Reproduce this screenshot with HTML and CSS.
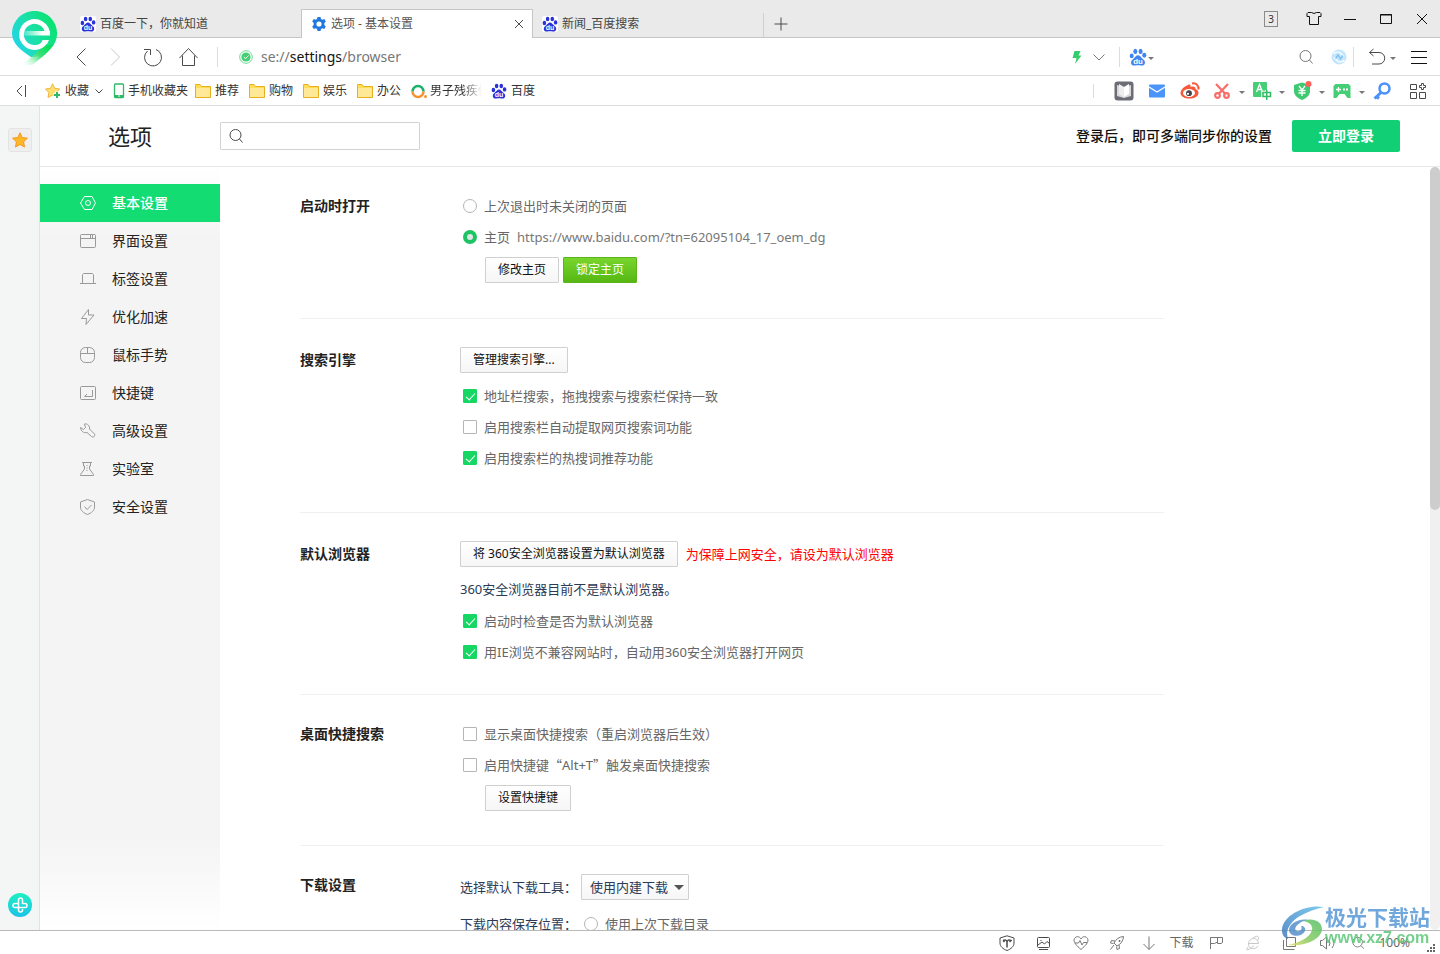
FILE: index.html
```html
<!DOCTYPE html>
<html lang="zh-CN">
<head>
<meta charset="utf-8">
<title>选项 - 基本设置</title>
<link rel="stylesheet" href="styles.css">
</head>
<body>
<svg class="sprite" aria-hidden="true">
  <symbol id="paw" viewBox="0 0 16 16">
    <ellipse cx="2.4" cy="7" rx="1.8" ry="2.2"/><ellipse cx="5.6" cy="3" rx="1.8" ry="2.3"/><ellipse cx="10.3" cy="3" rx="1.8" ry="2.3"/><ellipse cx="13.6" cy="6.4" rx="1.8" ry="2.2"/>
    <path d="M8 6.4c1.8 0 2.4 1.6 3.6 2.7 1.3 1.2 2.9 2.2 2.6 4.2-.3 2-2 2.5-3.6 2.2-1.800-.3-3.400-.3-5.200 0-1.800.3-3.400-.4-3.600-2.200-.2-2 1.300-3 2.600-4.200C5.600 8 6.200 6.400 8 6.400z"/>
    <text x="8" y="14.200" class="paw-text">du</text>
  </symbol>
  <symbol id="folder" viewBox="0 0 16 16">
    <path d="M.5 2.500V14.500h15V3.500H6.500L5 1.500H.5z" fill="#ffdd55" stroke="#e9ae1c"/><path d="M1 5h14v9H1z" fill="#ffe996"/>
  </symbol>
  <symbol id="lens" viewBox="0 0 16 16"><circle cx="7.500" cy="7" r="5.500"/><path d="M11.500 11l3 3.500"/></symbol>
</svg>

<header class="titlebar">
  <nav class="tabs">
    <a class="tab" href="#"><span class="favicon"><svg class="i16 c-baidu"><use href="#paw"/></svg></span>百度一下，你就知道</a>
    <div class="tab tab-active">
      <svg class="i16" viewBox="0 0 16 16"><g fill="#1f77e0"><path d="M6.500 1h3l.5 2 1.300.7 2-.8 1.500 2.600L13.300 7v2l1.500 1.500-1.500 2.600-2-.8-1.300.7-.5 2h-3L6 13l-1.300-.7-2 .8-1.500-2.600L2.700 9V7L1.200 5.500l1.500-2.600 2 .8L6 3z"/></g><circle cx="8" cy="8" r="2.600" fill="#fff"/></svg>
      <span class="tab-title">选项 - 基本设置</span>
      <button class="tab-close" aria-label="关闭标签"><svg class="i10 line" viewBox="0 0 10 10"><path d="M1 1l8 8M9 1l-8 8"/></svg></button>
    </div>
    <a class="tab tab-last" href="#"><span class="favicon"><svg class="i16 c-baidu"><use href="#paw"/></svg></span>新闻_百度搜索</a>
    <button class="tab-new" aria-label="新建标签"><svg class="i14 line" viewBox="0 0 14 14"><path d="M7 .5v13M.5 7h13"/></svg></button>
  </nav>
  <div class="window-controls">
    <button class="count"><span>3</span></button>
    <button aria-label="皮肤"><svg class="i16 line dark" viewBox="0 0 16 16"><path d="M5.500 1.500Q8 3.500 10.500 1.500h3.500l1 1V5.500h-2.500V13.500h-9V5.500H1V2.500l1-1z"/></svg></button>
    <button aria-label="最小化"><svg class="i12 line dark" viewBox="0 0 12 12"><path d="M0 6.500h12"/></svg></button>
    <button aria-label="最大化"><svg class="i12 line dark" viewBox="0 0 12 12"><path d="M.5 1.500h11v9H.5zM0 2h12"/></svg></button>
    <button aria-label="关闭"><svg class="i12 line dark" viewBox="0 0 12 12"><path d="M1 1l10 10M11 1L1 11"/></svg></button>
  </div>
</header>

<svg class="logo" viewBox="0 0 52 60" aria-hidden="true">
  <defs>
    <linearGradient id="lg" x1="0" y1=".8" x2="1" y2=".3"><stop offset="0" stop-color="#22d4ef"/><stop offset=".5" stop-color="#1be0a8"/><stop offset="1" stop-color="#08e36a"/></linearGradient>
    <linearGradient id="lt" gradientUnits="userSpaceOnUse" x1="38" y1="38" x2="18" y2="58"><stop offset="0" stop-color="#08e060"/><stop offset=".4" stop-color="#3fe07a"/><stop offset="1" stop-color="#c8f8d8" stop-opacity=".1"/></linearGradient>
    <linearGradient id="lb" x1="0" y1="0" x2="1" y2="0"><stop offset="0" stop-color="#fff" stop-opacity=".2"/><stop offset=".7" stop-color="#fff"/></linearGradient>
  </defs>
  <path d="M26.500 3C39 3 49 13 49 25.500c0 7-3 12-8 16L27 49h-4C14 43 4 36 4 25.500 4 13 14 3 26.500 3z" fill="url(#lg)"/>
  <path d="M46 36C42 43 32 51 24 57H14l13-11 9-8z" fill="url(#lt)"/>
  <path d="M39.500 25.500A13 13 0 1 0 37.500 33.500" fill="none" stroke="#fff" stroke-width="4.800"/>
  <path d="M34.500 32H41l-2 4h-6z" fill="#fff"/>
  <path d="M16 23h26v4.500H16z" fill="url(#lb)"/>
</svg>

<div class="toolbar">
  <div class="nav-buttons">
    <button aria-label="后退"><svg class="i20 line" viewBox="0 0 20 20"><path d="M14.500 1.500L6 10l8.500 8.500"/></svg></button>
    <button aria-label="前进"><svg class="i20 line pale" viewBox="0 0 20 20"><path d="M4 1.500l8.500 8.500L4 18.500"/></svg></button>
    <button aria-label="刷新"><svg class="i20 line" viewBox="0 0 20 20"><path d="M13 2.500A8.500 8.500 0 1 1 4.500 4M1 2.500h6.500V8"/></svg></button>
    <button aria-label="主页"><svg class="i20 line" viewBox="0 0 20 20"><path d="M.5 11L9.500 1.500 18.500 11M3.500 8.500V18.500h12V8.500"/></svg></button>
  </div>
  <i class="rule"></i>
  <label class="address">
    <svg class="i14" viewBox="0 0 14 14"><circle cx="7" cy="7" r="6.300" fill="#fff" stroke="#6cdb93"/><circle cx="7" cy="7" r="4.600" fill="#45cf75"/><path d="M4.800 7l1.700 1.700L9.500 5.500" fill="none" stroke="#fff"/></svg>
    <span class="url">se://<b>settings</b>/browser</span>
  </label>
  <div class="tools">
    <button class="s22" aria-label="极速模式"><svg class="i16" viewBox="0 0 16 16"><path d="M5.500 2h6L9.500 6.500h3L6 15l1.500-6H3.500z" fill="#36cd6c"/></svg></button>
    <button class="s22" aria-label="展开"><svg class="i12 line gray" viewBox="0 0 12 12"><path d="M.5 3.500L6 9l5.500-5.500"/></svg></button>
    <i class="rule"></i>
    <button class="s18" aria-label="百度"><svg class="i18 c-blue"><use href="#paw"/></svg></button>
    <i class="caret"></i>
    <button class="s22 search-slot" aria-label="搜索"><svg class="i16 line gray"><use href="#lens"/></svg></button>
    <button class="s22 sync-slot" aria-label="同步"><svg class="i16" viewBox="0 0 16 16"><circle cx="8" cy="8" r="7.500" fill="#c4e6fc"/><path d="M2.500 5Q5 2 9 3.500l4 4M13.500 11Q11 14 7 12.500L3 8.500" fill="none" stroke="#fff" stroke-width="1.200"/><path d="M4.500 9.500L7 6l2.500 4L12 6.500" fill="none" stroke="#79c2f3" stroke-width="1.300"/></svg></button>
    <i class="rule rule-tight"></i>
    <button class="s24" aria-label="撤销"><svg class="i18 line" viewBox="0 0 18 18"><path d="M5.500 1L1.500 4.500l4 3.500M1.500 4.500H11a5.500 5.500 0 0 1 0 11.500H4"/></svg></button>
    <i class="caret"></i>
    <button class="s22 menu-slot" aria-label="菜单"><svg class="i16 line dark" viewBox="0 0 16 16"><path d="M0 2.500h16M0 8.500h16M0 14.500h16"/></svg></button>
  </div>
</div>

<div class="bookmarks">
  <button class="collapse" aria-label="收起"><svg class="i12 line" viewBox="0 0 12 12"><path d="M7 1L2 6l5 5M10.500 0v12"/></svg></button>
  <a href="#"><svg class="i16" viewBox="0 0 16 16"><path d="M7.500.8l2.200 4.500 5 .7-3.600 3.500.8 5-4.400-2.400L3 14.500l.9-5L.5 6l5-.7z" fill="#ffdf70" stroke="#efb73c"/><path d="M12 8.500v7M8.500 12h7" stroke="#fff" stroke-width="4"/><path d="M12 9v6M9 12h6" stroke="#31b96a" stroke-width="2"/></svg>收藏<svg class="i8 line" viewBox="0 0 8 8"><path d="M.5 2.500L4 6l3.500-3.500"/></svg></a>
  <a class="tight" href="#"><svg class="phone" viewBox="0 0 12 16"><rect x="1.500" y="1" width="9" height="13.500" rx="1" fill="#fff" stroke="#2fb868" stroke-width="1.300"/><path d="M1 12h10v2.500H1z" fill="#2fb868"/><circle cx="6" cy="13" r=".8" fill="#fff"/></svg>手机收藏夹</a>
  <a href="#"><svg class="i16"><use href="#folder"/></svg>推荐</a>
  <a href="#"><svg class="i16"><use href="#folder"/></svg>购物</a>
  <a href="#"><svg class="i16"><use href="#folder"/></svg>娱乐</a>
  <a href="#"><svg class="i16"><use href="#folder"/></svg>办公</a>
  <a class="tight" href="#"><svg class="i16" viewBox="0 0 16 16"><path d="M1.500 8.500a5.500 5.500 0 1 1 11 0" fill="none" stroke="#19b26b" stroke-width="2.500"/><path d="M1.500 8.500a5.500 5.500 0 0 0 11 0" fill="none" stroke="#f8922f" stroke-width="2.500"/><circle cx="14.500" cy="13.500" r="1.500" fill="#f8922f"/></svg><span class="fade">男子残疾仍</span></a>
  <a href="#"><svg class="i16 c-baidu"><use href="#paw"/></svg>百度</a>
  <div class="plugins">
    <i class="rule rule-short"></i>
    <button class="s33" aria-label="阅读"><svg class="i20" viewBox="0 0 20 20"><rect x=".5" y=".5" width="19" height="19" rx="3" fill="#6b6c75"/><path d="M3 4l7 2 7-2v11l-7 2-7-2z" fill="#d9d9dc"/><path d="M5 3l5 3v10l-5-3z" fill="#eee"/><path d="M10 6l5-3v10l-5 3z" fill="#fff"/></svg></button>
    <button class="s33" aria-label="邮件"><svg class="i16" viewBox="0 0 16 16"><rect y="1.500" width="16" height="13" rx="1" fill="#4b95fa"/><path d="M0 4l8 5 8-5" fill="none" stroke="#fff" stroke-width="1.200"/></svg></button>
    <button class="s33" aria-label="微博"><svg class="i20" viewBox="0 0 20 20"><path d="M8 4c2-1 3 0 2.500 2 3-1 5.500 0 5 2 2 .8 3 2 3 4 0 3.500-4 5.500-9 5.500S.5 15.500.5 12C.5 8.500 5 5 8 4z" fill="#f4593b"/><ellipse cx="9" cy="12" rx="6" ry="4" fill="#fff"/><circle cx="9" cy="12.200" r="2.900" fill="#444"/><circle cx="8" cy="12.800" r="1.100" fill="#fff"/><path d="M12 2.500c4-1 7 2 6.500 6" fill="none" stroke="#f4593b" stroke-width="2"/></svg></button>
    <button class="s32" aria-label="截图"><svg class="i16" viewBox="0 0 16 16"><g fill="none" stroke="#f86d68" stroke-width="2.200"><path d="M2 1l9.500 10M14 1L4.500 11"/><circle cx="3.500" cy="12.500" r="2.300"/><circle cx="12.500" cy="12.500" r="2.300"/></g></svg></button><i class="caret"></i>
    <button class="s32" aria-label="翻译"><svg class="i20" viewBox="0 0 20 20"><rect x="1" y="1" width="14" height="15" rx="1" fill="#45ce76"/><path d="M4.500 11L7.500 3.500 10.500 11M5.500 8.500h4" fill="none" stroke="#fff" stroke-width="1.300"/><path d="M11 11.500h7.500v4H11zM14.700 9v9.500" fill="none" stroke="#fff" stroke-width="3.400"/><path d="M11 11.500h7.500v4H11zM14.700 9v10" fill="none" stroke="#31ba64" stroke-width="1.500"/></svg></button><i class="caret"></i>
    <button class="s32" aria-label="购物保护"><svg class="i20" viewBox="0 0 20 20"><path d="M10 1.500l8 2.500v6c0 4-3 7-8 9-5-2-8-5-8-9V4z" fill="#3fc970"/><path d="M7 5l3 4 3-4M10 9v6M6.500 9.500h7M6.500 12h7" fill="none" stroke="#fff" stroke-width="1.300"/><circle cx="16.500" cy="3" r="3" fill="#ff625b"/></svg></button><i class="caret"></i>
    <button class="s32" aria-label="游戏"><svg class="i18" viewBox="0 0 18 18"><path d="M2.500 2h13l2 2v12h-3l-3-4h-5l-3 4h-3V4z" fill="#45ce76"/><path d="M5.500 5v5M3 7.500h5" stroke="#fff" stroke-width="1.300"/><path d="M10 6.500h2v2h-2zM13 6.500h2v2h-2z" fill="#fff"/></svg></button><i class="caret"></i>
    <button class="s32" aria-label="密码"><svg class="i18" viewBox="0 0 18 18"><g fill="none" stroke="#4c91fb"><circle cx="11.500" cy="6.500" r="5" stroke-width="2.500"/><path d="M8 10.500L1.500 16.500M3.500 14.500l2.500 2" stroke-width="3"/></g></svg></button>
    <button class="s40" aria-label="全部扩展"><svg class="i16 line" viewBox="0 0 16 16"><path d="M.5 1.500h6v5h-6zM.5 9.500h6v6h-6zM9.500 9.500h6v6h-6zM11.500 .5h2v2h2v2h-2v2h-2v-2h-2v-2h2z"/></svg></button>
  </div>
</div>

<div class="workspace">
  <aside class="dock">
    <button class="dock-star" aria-label="收藏夹"><svg class="i16" viewBox="0 0 16 16"><path d="M8 .8l2.200 4.700 5.200.7-3.800 3.600.9 5.200L8 12.500 3.500 15l.9-5.200L.6 6.200l5.200-.7z" fill="#ffb62a" stroke="#f09a1c"/></svg></button>
    <button class="dock-add" aria-label="添加"><svg class="i18 line" viewBox="0 0 18 18"><path d="M7.500 11V4a2 2 0 0 1 4 0v3.500H14a2 2 0 0 1 0 4H4a2 2 0 0 1 0-4h3M7.500 11.500V14a2 2 0 0 0 4 0v-1"/></svg></button>
  </aside>
  <div class="page">
    <header class="page-header">
      <h1>选项</h1>
      <label class="search"><svg class="i16 line"><use href="#lens"/></svg><input type="text" aria-label="搜索选项"></label>
      <span class="login-hint">登录后，即可多端同步你的设置</span>
      <button class="login">立即登录</button>
    </header>
    <div class="page-body">
      <nav class="sidebar">
        <a class="current" href="#"><svg class="i16 line" viewBox="0 0 16 16"><path d="M4.500 1.500h7.500L15.500 8 12 14.500H4.500L.5 8z"/><circle cx="8" cy="8" r="2.500"/></svg>基本设置</a>
        <a href="#"><svg class="i16 line" viewBox="0 0 16 16"><rect x=".5" y="1.500" width="15" height="13" rx="1"/><path d="M1 5.500h14M10.500 2v3M12.500 2v3"/></svg>界面设置</a>
        <a href="#"><svg class="i16 line" viewBox="0 0 16 16"><path d="M0 12.500h16M2.500 12V3.500l1-1h9l1 1V12"/></svg>标签设置</a>
        <a href="#"><svg class="i16 line" viewBox="0 0 16 16"><path d="M8.500.5L1.500 9.500h5l-.5 6 8-9.500H8.500z"/></svg>优化加速</a>
        <a href="#"><svg class="i16 line" viewBox="0 0 16 16"><rect x=".5" y=".5" width="14" height="15" rx="5"/><path d="M1 6.500h13M7.500 1v5"/></svg>鼠标手势</a>
        <a href="#"><svg class="i16 line" viewBox="0 0 16 16"><rect x=".5" y="1.500" width="15" height="13" rx="1"/><path d="M12.500 5v6.500h-8L7 9"/></svg>快捷键</a>
        <a href="#"><svg class="i16 line" viewBox="0 0 16 16"><path d="M4.500 1c3-.8 5.500 2 5 5l5 5c1 2-1 4-3 2.500L7 9.500C4 10.500.5 8 .5 4.500l3 2 2-2z"/></svg>高级设置</a>
        <a href="#"><svg class="i16 line" viewBox="0 0 16 16"><path d="M2 1.500h10M3.500 2v3h1v3L.5 13.500v1h13v-1L9.500 8V5h1V2M6.500 4.500h1M6.500 7h1M6.500 9.500h1"/></svg>实验室</a>
        <a href="#"><svg class="i16 line" viewBox="0 0 16 16"><path d="M7.500.5l7 2.500v5c0 3.500-3 6-7 7.500C3.500 14 .5 11.500.5 8V3zM4.500 7.500l2.500 3L11.500 6"/></svg>安全设置</a>
      </nav>
      <main class="settings">
        <section class="group group-first">
          <h2>启动时打开</h2>
          <div class="options">
            <label class="option"><input type="radio" name="start">上次退出时未关闭的页面</label>
            <label class="option"><input type="radio" name="start" checked>主页<span class="home-url">https://www.baidu.com/?tn=62095104_17_oem_dg</span></label>
            <div class="sub-actions"><button class="btn">修改主页</button><button class="btn btn-green">锁定主页</button></div>
          </div>
        </section>
        <section class="group group-tall">
          <h2>搜索引擎</h2>
          <div class="options">
            <div class="actions"><button class="btn">管理搜索引擎...</button></div>
            <label class="option"><input type="checkbox" checked>地址栏搜索，拖拽搜索与搜索栏保持一致</label>
            <label class="option"><input type="checkbox">启用搜索栏自动提取网页搜索词功能</label>
            <label class="option"><input type="checkbox" checked>启用搜索栏的热搜词推荐功能</label>
          </div>
        </section>
        <section class="group group-short">
          <h2>默认浏览器</h2>
          <div class="options">
            <div class="actions"><button class="btn">将 360安全浏览器设置为默认浏览器</button><span class="warning">为保障上网安全，请设为默认浏览器</span></div>
            <p class="note">360安全浏览器目前不是默认浏览器。</p>
            <label class="option"><input type="checkbox" checked>启动时检查是否为默认浏览器</label>
            <label class="option"><input type="checkbox" checked>用IE浏览不兼容网站时，自动用360安全浏览器打开网页</label>
          </div>
        </section>
        <section class="group">
          <h2>桌面快捷搜索</h2>
          <div class="options">
            <label class="option"><input type="checkbox">显示桌面快捷搜索（重启浏览器后生效）</label>
            <label class="option"><input type="checkbox">启用快捷键<span class="cjk">“</span>Alt+T<span class="cjk">”</span>触发桌面快捷搜索</label>
            <div class="sub-actions"><button class="btn">设置快捷键</button></div>
          </div>
        </section>
        <section class="group">
          <h2>下载设置</h2>
          <div class="options">
            <div class="field"><label for="tool">选择默认下载工具：</label><span class="select"><select id="tool"><option>使用内建下载</option></select></span></div>
            <div class="field"><span>下载内容保存位置：</span><label class="option"><input type="radio" name="dir">使用上次下载目录</label></div>
          </div>
        </section>
      </main>
      <div class="scrollbar"><div class="thumb"></div></div>
    </div>
  </div>
</div>

<footer class="statusbar">
  <button class="s37" aria-label="安全"><svg class="i16 line" viewBox="0 0 16 16"><path d="M8 .8l7 2.200v5c0 3.500-3 6-7 7.500C4 14 1 11.500 1 8V3z"/><path d="M8 12.500V6.500M4 5.500q3.500-1.500 4 1.500 .5-3 4-1.500L10.500 7M4 5.500L5.500 7" stroke-width="1.500"/></svg></button>
  <button class="s37" aria-label="图片"><svg class="i16 line" viewBox="0 0 16 16"><rect x="1.500" y="2.500" width="12" height="10" rx="1"/><path d="M2 10l4-3 2.500 2L11 6.500l2.500 2M3 14.500h9M4.500 5.500h1"/></svg></button>
  <button class="s37" aria-label="医生"><svg class="i16 line gray" viewBox="0 0 16 16"><path d="M8 4C6.500 1 3 1 1.500 3.500-.5 7 4 11 8 14.500 12 11 16.500 7 14.500 3.500 13 1 9.500 1 8 4zM2 8h3.500L7 5.500 9 10l1.500-2.500H14"/></svg></button>
  <button class="s36" aria-label="加速器"><svg class="i16 line gray" viewBox="0 0 16 16"><path d="M14.500 1.500Q8 2 5 8l3 3q6-3 6.500-9.500zM6 6L2.500 5.500 1.500 8l3 .5M10 10l.5 3.500-2.500 1-.5-3M5 10l-3.500 4.500M10 5.500h1v1h-1z"/></svg></button>
  <button class="download"><svg class="i16 line gray" viewBox="0 0 16 16"><path d="M8 1.500v13M2.500 9L8 14.500 13.500 9"/></svg>下载</button>
  <button class="s36" aria-label="标记"><svg class="i16 line gray" viewBox="0 0 16 16"><path d="M1.500 14V2.500h12v5l-1.500 1H8.500V3M1.500 8.500h4l3-1.500"/></svg></button>
  <button class="s36" aria-label="内核"><svg class="i16 line pale" viewBox="0 0 16 16"><path d="M3.500 8.500h10C13 1.500 4 2 3.500 8.500 3 15 11 14.500 13 11M3 12c-4 5 2 2.500 6-1.500M8 3c4-3 7-2 5 2"/></svg></button>
  <button class="s37" aria-label="窗口"><svg class="i16 line gray" viewBox="0 0 16 16"><path d="M4.500 2.500h9v9h-9zM1.500 5v9.500h11"/></svg></button>
  <button class="s37" aria-label="声音"><svg class="i16 line gray" viewBox="0 0 16 16"><path d="M1.500 5.500h2l4-3.500v12l-4-3.500h-2zM10 5q2 3 0 6M13 3q4 5 0 10"/></svg></button>
  <button class="zoom"><svg class="i14 line gray"><use href="#lens"/></svg>100%</button>
  <svg class="i8 grip" viewBox="0 0 8 8"><path d="M6 0h2v2H6zM3 3h2v2H3zM6 3h2v2H6zM0 6h2v2H0zM3 6h2v2H3zM6 6h2v2H6z"/></svg>
  <div class="watermark">
    <svg viewBox="0 0 44 42" aria-hidden="true">
      <defs><linearGradient id="wa" x1="1" y1="0" x2="0" y2="1"><stop offset="0" stop-color="#67c2ee"/><stop offset="1" stop-color="#3e78bd"/></linearGradient><linearGradient id="wb" x1="1" y1="0" x2="0" y2="1"><stop offset="0" stop-color="#4fc06a"/><stop offset=".6" stop-color="#8acb62"/><stop offset="1" stop-color="#e8df62"/></linearGradient></defs>
      <path d="M43 2C26-1 3 9 1 24c-.5 5 2 9 6 10-3-9 2-17 12-23 7-4 15-7 24-9z" fill="url(#wa)"/>
      <path d="M22 16c9-4 19 0 19 8C41 34 24 42 7 40c10-2 22-7 24-15 1-5-3-8-9-9z" fill="url(#wb)"/>
      <path d="M27 15C18 13 8 19 8 25c0 7 13 8 16 1 1-3-1-5-4-5 2 3-1 6-4 5-5-2 2-10 11-11z" fill="#5590ca"/>
    </svg>
    <div><strong>极光下载站</strong><span>www.xz7.com</span></div>
  </div>
</footer>
</body>
</html>
```
FILE: styles.css
```css
* { box-sizing: border-box; }

body {
  margin: 0;
  height: 100vh;
  display: flex;
  flex-direction: column;
  overflow: hidden;
  background: #fff;
  color: #333;
  font: 12px/20px "Noto Sans", "Noto Sans CJK SC", sans-serif;
}

button {
  display: flex;
  align-items: center;
  justify-content: center;
  flex: none;
  padding: 0;
  border: 0;
  background: none;
  color: inherit;
  font: inherit;
}
a { color: inherit; text-decoration: none; }
h1, h2, p { margin: 0; }
svg { display: block; flex: none; }

.sprite { position: absolute; width: 0; height: 0; }
.i8 { width: 8px; height: 8px; }
.i10 { width: 10px; height: 10px; }
.i12 { width: 12px; height: 12px; }
.i14 { width: 14px; height: 14px; }
.i16 { width: 16px; height: 16px; }
.i18 { width: 18px; height: 18px; }
.i20 { width: 20px; height: 20px; }
.line { fill: none; stroke: #4a4a4a; stroke-width: 1; }
.dark { stroke: #111; }
.gray { stroke: #777; }
.pale { stroke: #c8c8c8; }
.c-baidu { fill: #2a32d8; }
.c-blue { fill: #4285f0; }
.paw-text { fill: #fff; font: bold 7px "Liberation Sans", sans-serif; text-anchor: middle; }
.cjk { font-family: "Noto Sans CJK SC", sans-serif; }

.s18 { width: 18px; }
.s22 { width: 22px; }
.s24 { width: 24px; }
.s32 { width: 32px; }
.s33 { width: 33px; }
.s36 { width: 36px; }
.s37 { width: 37px; }
.s40 { width: 40px; }

.rule { width: 1px; height: 20px; background: #dcdcdc; flex: none; }
.caret {
  width: 6px;
  margin: 3px 1px 0;
  border: 3px solid transparent;
  border-top-color: #777;
  border-bottom: 0;
}

/* Tab strip */
.titlebar {
  display: flex;
  justify-content: space-between;
  height: 38px;
  flex: none;
  background: #eaeaea;
  box-shadow: inset 0 -1px #c6c6c6;
}
.tabs { display: flex; align-items: flex-end; padding-left: 70px; }
.tab {
  display: flex;
  align-items: center;
  gap: 4px;
  width: 231px;
  height: 29px;
  padding: 0 8px 0 10px;
  color: #444;
}
.favicon { background: #fff; border-radius: 2px; }
.tab-active {
  width: 232px;
  background: #fff;
  border: 1px solid #c6c6c6;
  border-bottom: 0;
  padding-left: 9px;
  color: #555;
}
.tab-title { flex: 1; }
.tab-last { padding-left: 9px; position: relative; }
.tab-last::after {
  content: "";
  position: absolute;
  right: 0;
  top: 4px;
  width: 1px;
  height: 24px;
  background: #cfcfcf;
}
.tab-new { width: 34px; height: 29px; }
.window-controls { display: flex; }
.window-controls button { width: 36px; }
.window-controls .count { width: 50px; }
.count span {
  width: 14px;
  height: 16px;
  border: 1px solid #8a8a8a;
  font-size: 10px;
  line-height: 14px;
}

.logo { position: absolute; left: 8px; top: 8px; width: 52px; height: 60px; }

/* Address bar */
.toolbar {
  display: flex;
  align-items: center;
  height: 38px;
  flex: none;
  padding: 0 10px 0 63px;
  border-bottom: 1px solid #dedede;
}
.nav-buttons { display: flex; margin-right: 10px; }
.nav-buttons button { width: 36px; }
.address { display: flex; align-items: center; gap: 8px; flex: 1; padding-left: 21px; }
.url { font-size: 14px; color: #777; }
.url b { font-weight: 400; color: #111; }
.tools, .plugins { display: flex; align-items: center; flex: none; }
.tools .rule { margin: 0 9px; }
.tools .rule-tight { margin: 0 11px 0 3px; }
.search-slot { margin-left: 140px; }
.sync-slot, .menu-slot { margin-left: 11px; }

/* Bookmarks bar */
.bookmarks {
  display: flex;
  align-items: center;
  gap: 10px;
  height: 30px;
  flex: none;
  padding: 0 2px 0 15px;
  border-bottom: 1px solid #dedede;
  color: #333;
}
.bookmarks a { display: flex; align-items: center; gap: 4px; white-space: nowrap; }
.bookmarks a .i8 { margin-left: 2px; }
.bookmarks .tight { gap: 3px; margin-right: -3px; }
.collapse { width: 12px; margin-right: 8px; }
.phone { width: 12px; height: 16px; }
.fade {
  width: 54px;
  overflow: hidden;
  -webkit-mask-image: linear-gradient(90deg, #000 60%, transparent 96%);
  mask-image: linear-gradient(90deg, #000 60%, transparent 96%);
}
.plugins { margin-left: auto; }
.rule-short { height: 14px; margin-right: 13px; }

/* Main area */
.workspace { display: flex; flex: 1; min-height: 0; }
.dock {
  display: flex;
  flex-direction: column;
  align-items: center;
  justify-content: space-between;
  width: 40px;
  flex: none;
  padding: 22px 0 13px;
  border-right: 1px solid #e2e2e2;
  background: #f4f6f6;
}
.dock-star { width: 24px; height: 24px; border: 1px solid #e3e3e3; border-radius: 3px; background: #efefef; }
.dock-add { width: 24px; height: 24px; border-radius: 50%; background: linear-gradient(#1ef0c0, #1cc2e8); }
.dock-add svg { stroke: #fff; stroke-width: 1.5; }
.page { display: flex; flex-direction: column; flex: 1; min-width: 0; }
.page-header {
  display: flex;
  align-items: center;
  height: 61px;
  flex: none;
  padding: 0 40px 0 68px;
  border-bottom: 1px solid #e8e8e8;
}
h1 { width: 112px; font-size: 22px; line-height: 30px; font-weight: 400; color: #222; }
.search {
  display: flex;
  align-items: center;
  width: 200px;
  height: 28px;
  padding: 0 7px;
  border: 1px solid #d2d2d2;
  border-radius: 1px;
}
.search input { flex: 1; min-width: 0; border: 0; outline: 0; background: none; font: inherit; }
.login-hint { margin: 0 20px 0 auto; font-size: 14px; font-weight: 500; color: #111; }
.login {
  width: 108px;
  height: 32px;
  border-radius: 2px;
  background: #10cf75;
  color: #fff;
  font-size: 14px;
  font-weight: 700;
}

.page-body { display: flex; flex: 1; min-height: 0; }
.sidebar {
  width: 180px;
  flex: none;
  padding-top: 17px;
  background: linear-gradient(#fff, #f4f4f4 72px, #f4f4f4 calc(100% - 92px), #fff);
}
.sidebar a {
  display: flex;
  align-items: center;
  gap: 16px;
  height: 38px;
  padding-left: 40px;
  font-size: 14px;
  color: #222;
}
.sidebar .line { stroke: #999; }
.sidebar .current { background: #12dc72; color: #fff; font-weight: 500; }
.sidebar .current .line { stroke: #fff; }

.settings { flex: 1; min-width: 0; overflow: hidden; padding: 0 266px 0 80px; }
.group {
  display: grid;
  grid-template-columns: 160px 1fr;
  align-items: start;
  padding: 23px 0 34px;
  border-bottom: 1px solid #f0f0f0;
}
.group-first { padding-bottom: 35px; }
.group-tall { padding-bottom: 39px; }
.group-short { padding-bottom: 27px; }
h2 { font-size: 14px; line-height: 31px; font-weight: 700; color: #222; }
.group-tall h2, .group-short h2 { line-height: 36px; }
.options { font-size: 13px; color: #666; }
.option { display: flex; align-items: center; height: 31px; padding-left: 3px; white-space: nowrap; }
.option input {
  appearance: none;
  position: relative;
  flex: none;
  width: 14px;
  height: 14px;
  margin: 0 7px 0 0;
  border: 1px solid #b5b5b5;
  border-radius: 1px;
  background: #fff;
}
.option input[type="radio"] { border-radius: 50%; }
.option input[type="radio"]:checked { border: 4px solid #1cc463; background: #e4e4e4; }
.option input[type="checkbox"]:checked { border-color: #17d764; background: #17d764; }
.option input[type="checkbox"]:checked::after {
  content: "";
  position: absolute;
  left: 4px;
  top: 1px;
  width: 4px;
  height: 8px;
  border: solid #fff;
  border-width: 0 1px 1px 0;
  transform: rotate(42deg);
}
.home-url { margin-left: 7px; color: #777; }
.actions { display: flex; align-items: center; gap: 8px; margin: 5px 0 7px; }
.sub-actions { display: flex; gap: 4px; padding: 5px 0 0 25px; }
.btn {
  height: 26px;
  padding: 0 12px;
  border: 1px solid #d0d0d0;
  border-radius: 1px;
  background: linear-gradient(#fff, #f6f6f6);
  color: #111;
  font-size: 12px;
  white-space: nowrap;
}
.btn-green { border-color: #5bb418; background: linear-gradient(#78d52d, #57b813); color: #fff; }
.warning { color: #f00; }
.note { line-height: 31px; color: #2b3a55; }
.field { display: flex; align-items: center; height: 38px; color: #2b3a55; }
.field:first-child { height: 36px; }
.field .option { padding-left: 7px; color: #666; }
.select { position: relative; margin-left: 4px; }
.select select {
  appearance: none;
  width: 108px;
  height: 26px;
  padding: 0 8px;
  border: 1px solid #d0d0d0;
  border-radius: 1px;
  background: linear-gradient(#fff, #f6f6f6);
  color: #2b3a55;
  font: inherit;
}
.select::after {
  content: "";
  position: absolute;
  right: 5px;
  top: 11px;
  border: 5px solid transparent;
  border-top-color: #555;
  border-bottom: 0;
}
.scrollbar { width: 10px; flex: none; border-radius: 5px; background: #f0f0f0; }
.thumb { height: 45%; border-radius: 5px; background: #cdcdcd; }

/* Status bar */
.statusbar {
  position: relative;
  display: flex;
  align-items: center;
  justify-content: flex-end;
  height: 24px;
  flex: none;
  padding-right: 5px;
  border-top: 1px solid #b9b9b9;
  color: #666;
}
.download { gap: 12px; padding: 0 6px; }
.zoom { gap: 14px; margin: 0 17px 0 6px; }
.grip { margin-top: 10px; fill: #666; }
.watermark {
  position: absolute;
  right: 10px;
  bottom: 7px;
  display: flex;
  align-items: center;
  opacity: 0.85;
  pointer-events: none;
}
.watermark svg { width: 44px; height: 42px; }
.watermark div { display: flex; flex-direction: column; }
.watermark strong { font-size: 21px; line-height: 24px; color: #5898d6; }
.watermark span { font: 16px/18px "Liberation Sans", sans-serif; font-weight: 700; color: #5cc878; }
```
